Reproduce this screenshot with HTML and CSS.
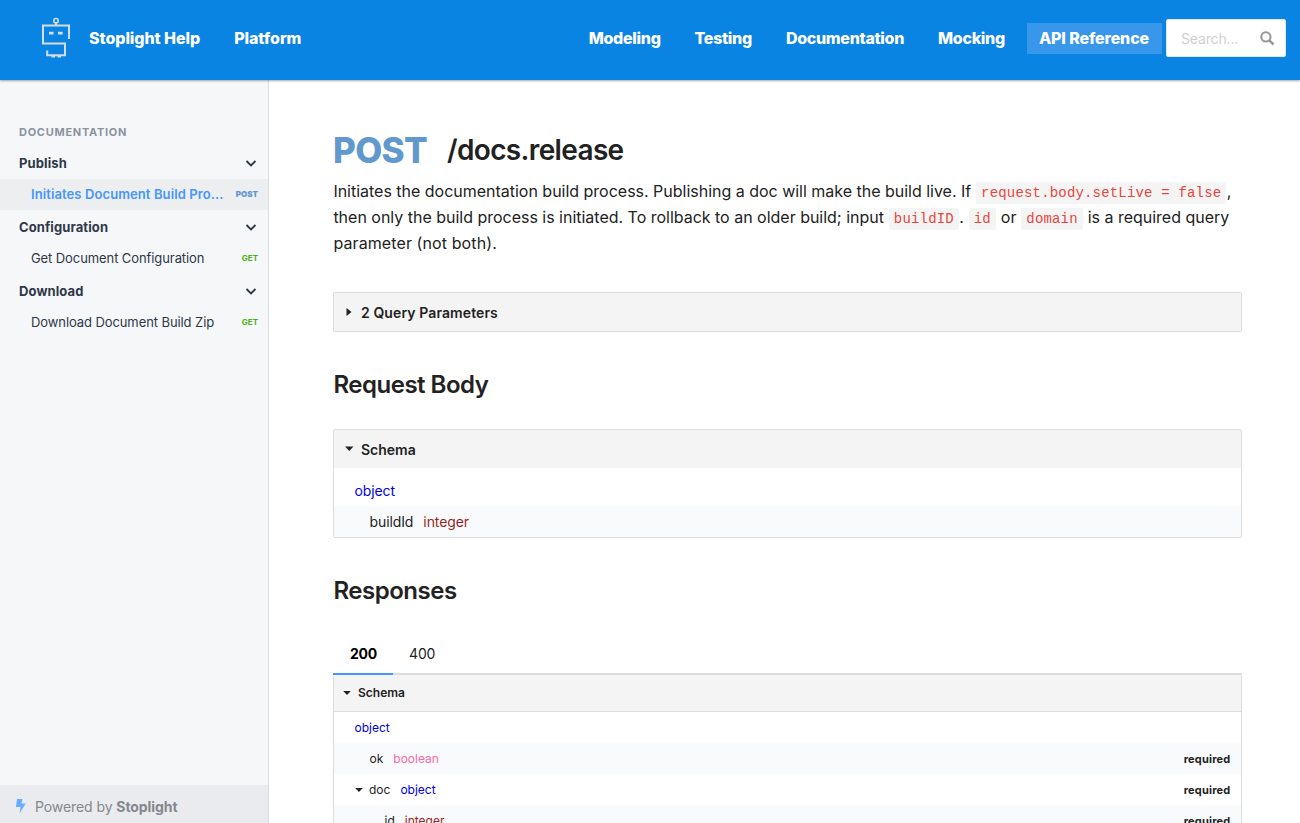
FILE: index.html
```
<!DOCTYPE html>
<html lang="en">
<head>
<meta charset="utf-8">
<title>Stoplight Help</title>
<link rel="stylesheet" href="styles.css">
</head>
<body>
<header class="header">
  <svg class="logo" width="30" height="42" viewBox="0 0 30 42" fill="none" stroke="#d5dbe2" stroke-width="2">
    <circle cx="15" cy="3.7" r="2.2" stroke-width="1.6"/>
    <path d="M15 6v2M28 22V8.500H2V26.500H24V38.300H6.200V33.500"/>
    <path d="M8 16.200h4.600M17 16.200h4.700" stroke-width="2.800"/>
    <path d="M10.500 39.500h3.500M16.500 39.500h3.500" stroke-width="2"/>
  </svg>
  <a class="nav-link brand">Stoplight Help</a>
  <a class="nav-link platform">Platform</a>
  <nav class="nav">
    <a class="nav-link">Modeling</a>
    <a class="nav-link">Testing</a>
    <a class="nav-link">Documentation</a>
    <a class="nav-link">Mocking</a>
    <a class="nav-link active">API Reference</a>
  </nav>
  <div class="search">
    <span>Search...</span>
    <svg width="15" height="15" viewBox="0 0 15 15" fill="none" stroke="#999"><circle cx="5.900" cy="5.900" r="4.600" stroke-width="2.100"/><path d="M9.300 9.300l4.200 4.200" stroke-width="2.500"/></svg>
  </div>
</header>
<div class="layout">
  <aside class="sidebar">
    <div class="side-title">DOCUMENTATION</div>
    <div class="group">Publish<svg class="chev" width="12" height="8" viewBox="0 0 12 8"><path d="M1.500 2L6 6.500l4.500-4.500"/></svg></div>
    <div class="item current"><span>Initiates Document Build Pro...</span><b class="post">POST</b></div>
    <div class="group">Configuration<svg class="chev" width="12" height="8" viewBox="0 0 12 8"><path d="M1.500 2L6 6.500l4.500-4.500"/></svg></div>
    <div class="item"><span>Get Document Configuration</span><b class="get">GET</b></div>
    <div class="group">Download<svg class="chev" width="12" height="8" viewBox="0 0 12 8"><path d="M1.500 2L6 6.500l4.500-4.500"/></svg></div>
    <div class="item"><span>Download Document Build Zip</span><b class="get">GET</b></div>
    <div class="powered">
      <svg width="10" height="15" viewBox="0 0 10 15"><path d="M1 0H6.500L5.500 4.500H9.700L3.500 14.500L4.500 8H0Z" fill="#69adff"/></svg>
      <span>Powered by <b>Stoplight</b></span>
    </div>
  </aside>
  <main class="main">
    <h1 class="title"><span class="method">POST</span><span class="path">/docs.release</span></h1>
    <p class="desc"><span class="d1">Initiates the documentation build process. Publishing a doc will make the build live. If <code>request.body.setLive = false</code>,</span><br><span class="d2">then only the build process is initiated. To rollback to an older build; input <code>buildID</code>. <code>id</code> or <code>domain</code> is a required query</span><br><span class="d3">parameter (not both).</span></p>
    <section class="panel query">
      <div class="panel-head"><svg class="tri" width="10" height="10" viewBox="0 0 10 10"><path d="M2.500 1L7.500 5L2.500 9Z"/></svg>2 Query Parameters</div>
    </section>
    <h2 class="h-body">Request Body</h2>
    <section class="panel body-panel">
      <div class="panel-head"><svg class="tri" width="10" height="10" viewBox="0 0 10 10"><path d="M1 2.500H9.500L5.250 7Z"/></svg>Schema</div>
      <div class="row first"><span class="object">object</span></div>
      <div class="row alt in1"><span>buildId</span><span class="integer">integer</span></div>
    </section>
    <h2 class="h-resp">Responses</h2>
    <div class="tabs"><div class="tab on">200</div><div class="tab">400</div></div>
    <section class="panel response">
      <div class="panel-head"><svg class="tri" width="10" height="10" viewBox="0 0 10 10"><path d="M1.200 3H8.800L5 7Z"/></svg>Schema</div>
      <div class="row"><span class="object">object</span></div>
      <div class="row alt in1"><span>ok</span><span class="boolean">boolean</span><b>required</b></div>
      <div class="row nested"><svg class="tri" width="10" height="10" viewBox="0 0 10 10"><path d="M1.200 3H8.800L5 7Z"/></svg><span>doc</span><span class="object">object</span><b>required</b></div>
      <div class="row alt in2"><span>id</span><span class="integer">integer</span><b>required</b></div>
    </section>
  </main>
</div>
</body>
</html>
```
FILE: styles.css
```
* { box-sizing: border-box; }
body { margin: 0; height: 823px; overflow: hidden; display: flex; flex-direction: column; font-family: Inter, "Liberation Sans", sans-serif; color: #222; background: #fff; white-space: nowrap; }
.header { height: 80px; flex: none; background: #0a84e3; display: flex; align-items: center; padding: 0 14px 4px 41px; box-shadow: 0 1px 2px rgba(0,0,0,.35); z-index: 1; }
.logo { flex: none; }
.nav-link { height: 31px; line-height: 31px; padding: 0 12px; color: #fff; font-size: 16px; font-weight: 800; letter-spacing: -.3px; }
.brand { margin-left: 6px; letter-spacing: -.06px; }
.platform { margin-left: 10px; letter-spacing: -.06px; }
.nav { display: flex; gap: 10px; margin-left: auto; }
.active { background: #3897eb; padding-right: 13px; letter-spacing: -.14px; }
.search { width: 120px; height: 38px; margin-left: 4px; background: #fff; border: 1px solid #dde8f2; border-radius: 2px; display: flex; align-items: center; justify-content: space-between; padding: 0 10px 0 14px; color: #d0d0d0; font-size: 14px; letter-spacing: -.15px; }
.layout { flex: 1; min-height: 0; display: flex; }
.sidebar { width: 269px; flex: none; border-right: 1px solid #d9dee5; background: #f5f7f9; display: flex; flex-direction: column; padding-top: 43px; color: #2f3748; font-size: 13px; }
.side-title { height: 18px; line-height: 18px; margin-bottom: 7px; padding-left: 19px; font-size: 11px; font-weight: 700; letter-spacing: .72px; color: #8b93a0; }
.group { height: 31px; display: flex; justify-content: space-between; align-items: center; padding: 0 11px 1px 19px; font-weight: 700; letter-spacing: .1px; margin-top: 2px; }
.side-title + .group { margin-top: 0; }
.chev path { fill: none; stroke: #2f3748; stroke-width: 1.8; }
.item { height: 31px; display: flex; justify-content: space-between; align-items: center; padding: 0 10px 1px 31px; letter-spacing: -.09px; }
.item b { font-size: 8px; letter-spacing: 0; }
.current { background: #edeef0; color: #4596ff; font-weight: 600; letter-spacing: .1px; }
.post { color: #6199cf; }
.get { color: #4caf13; }
.powered { margin-top: auto; height: 38px; background: #e9ebef; display: flex; align-items: center; gap: 9px; padding: 5px 0 0 16px; color: #85878c; font-size: 14px; letter-spacing: -.08px; }
.main { flex: 1; min-height: 0; overflow: hidden; padding: 48px 58px 0 64px; }
.title { margin: 0; height: 44px; line-height: 44px; display: flex; align-items: center; font-size: 28px; font-weight: 600; letter-spacing: -.65px; }
.method { font-size: 35px; font-weight: 800; color: #6199cf; width: 114px; }
.desc { margin: 6px 0 0; font-size: 16px; line-height: 26px; height: 78px; padding-left: .4px; color: #222; }
.d1, .d2 { letter-spacing: -.013px; }
.d3 { letter-spacing: .1px; }
code { font-family: "Liberation Mono", monospace; font-size: 14px; line-height: 22px; letter-spacing: .18px; color: #e8453c; background: #f4f4f4; border-radius: 2px; padding: 3px 5px; margin: 0 .4px; }
.panel { border: 1px solid #dcdcdc; border-radius: 2px; }
.panel-head { height: 38px; background: #f4f4f4; display: flex; align-items: center; gap: 7px; padding: 1px 0 0 10px; font-size: 14px; font-weight: 600; }
.query { margin-top: 36px; }
.query .panel-head { letter-spacing: .1px; }
.query .tri, .body-panel .tri { margin-top: -2px; }
.tri path { fill: #222; }
h2 { margin: 0; height: 36px; line-height: 36px; padding-left: .5px; font-size: 24px; font-weight: 600; letter-spacing: -.5px; }
.h-body { margin-top: 35px; }
.body-panel { margin-top: 26px; }
.row { height: 31px; display: flex; align-items: center; gap: 10px; padding: 0 10.5px 0 20.5px; font-size: 14px; letter-spacing: -.1px; }
.row.first { height: 38px; padding-top: 7px; }
.alt { background: #f8fafc; }
.in1 { padding-left: 35.5px; }
.in2 { padding-left: 50.5px; }
.row b { margin-left: auto; font-weight: 700; }
.object { color: #0000e8; }
.integer { color: #991f24; }
.boolean { color: #ff69a8; }
.h-resp { margin-top: 35px; }
.tabs { display: flex; height: 66px; padding-top: 27px; border-bottom: 2px solid #dcdcdc; font-size: 14px; }
.tab { width: 60px; height: 39px; line-height: 35px; padding-left: 16px; letter-spacing: -.15px; }
.on { padding-left: 17px; font-weight: 700; letter-spacing: -.2px; color: #000; border-bottom: 2px solid #4596ff; }
.response { border-top: 0; height: 200px; }
.response .panel-head { height: 37px; padding: 0 0 1px 8px; border-bottom: 1px solid #dcdcdc; font-size: 12px; gap: 6px; }
.response .row { font-size: 12px; letter-spacing: 0; }
.response .row b { font-size: 11px; letter-spacing: .2px; }
.nested .tri { margin-right: -5px; }
.nested { padding-left: 20px !important; }
```
